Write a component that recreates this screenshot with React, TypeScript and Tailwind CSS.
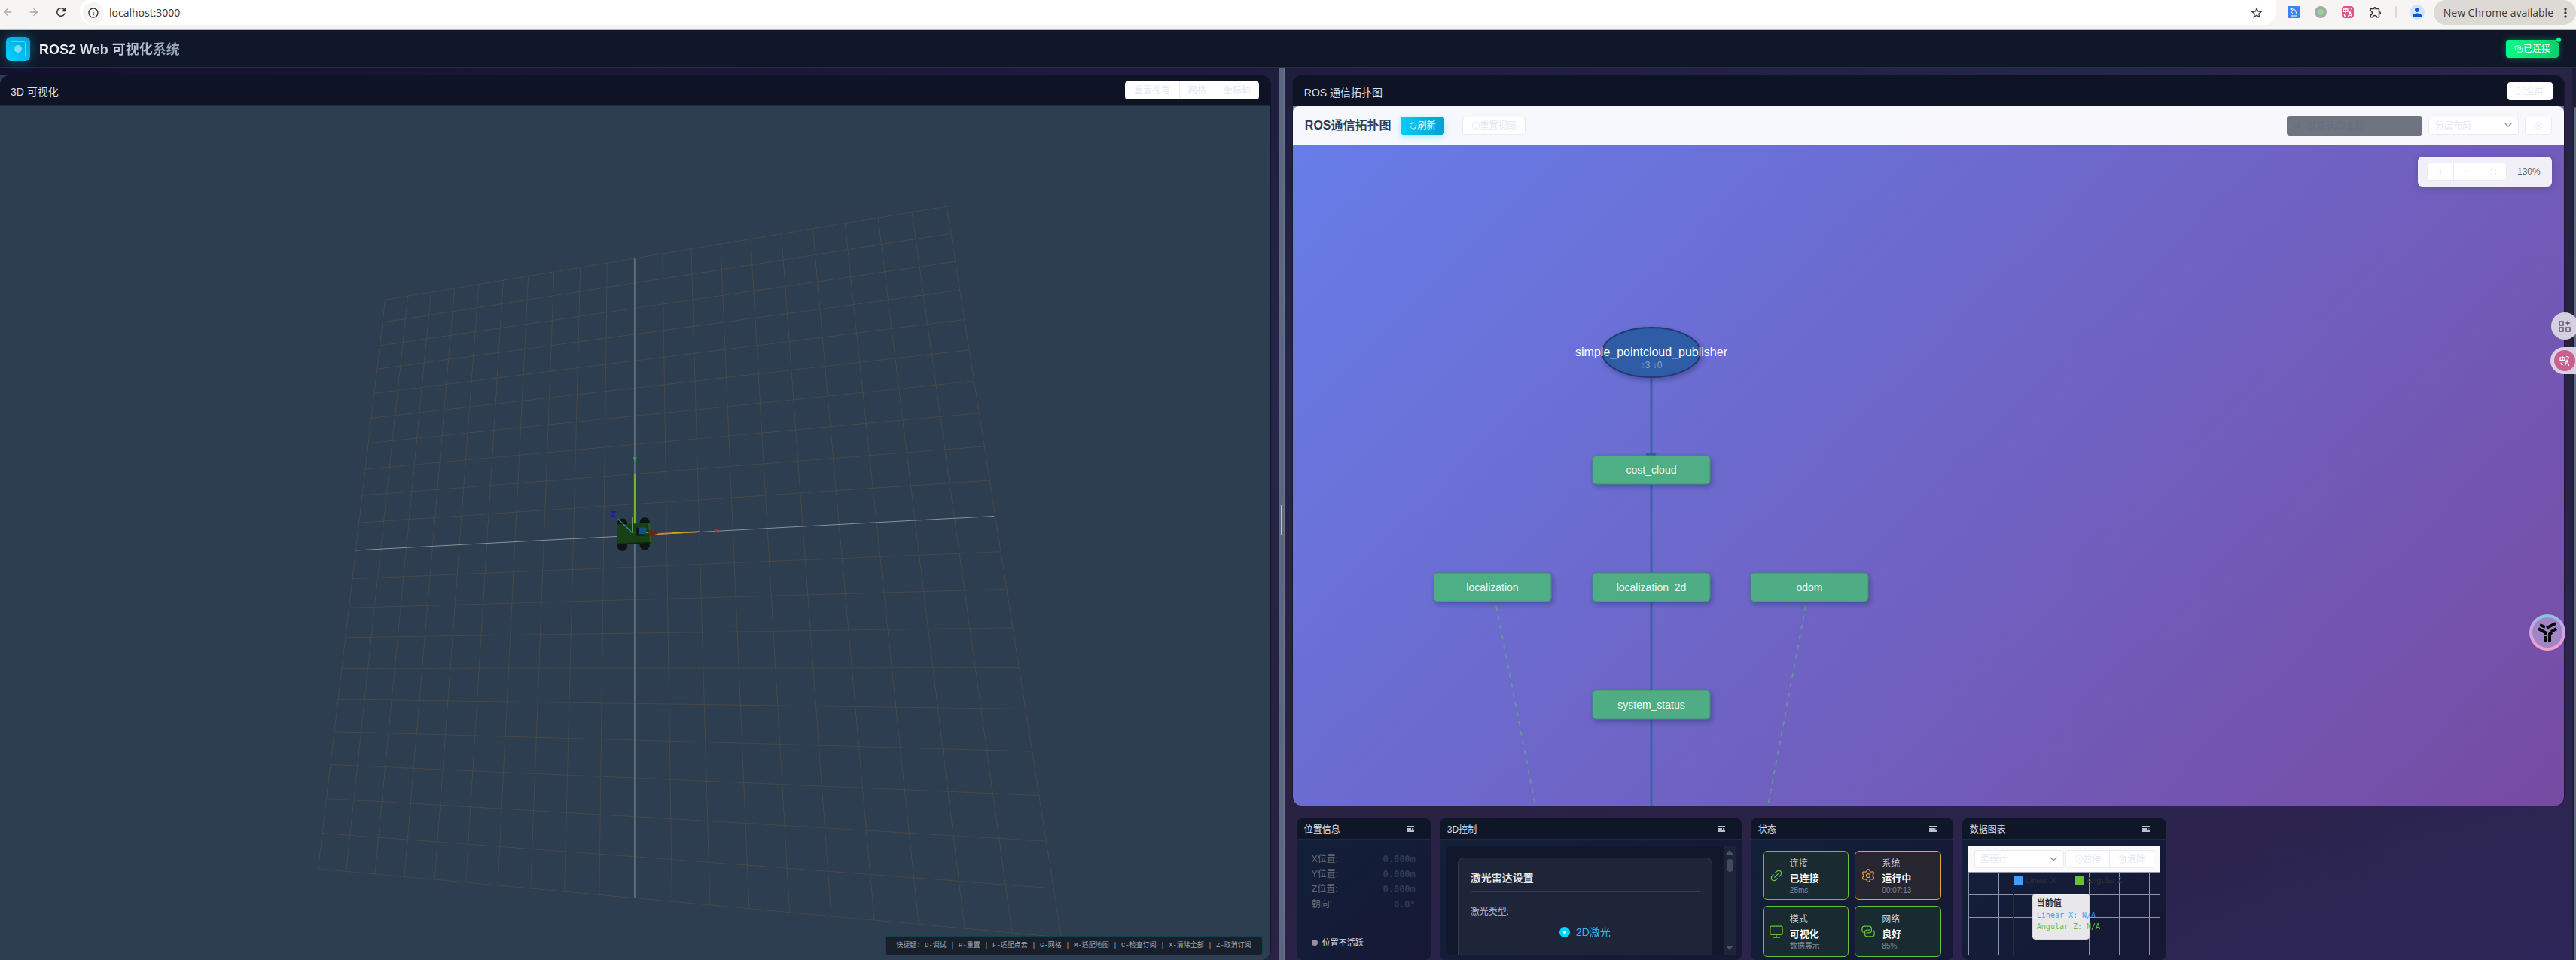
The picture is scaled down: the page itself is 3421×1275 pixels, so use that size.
import type { ReactNode } from "react";
import {
  MdArrowBack,
  MdArrowForward,
  MdMoreVert,
  MdOutlineExtension,
  MdOutlineInfo,
  MdPerson,
  MdRefresh,
  MdStarBorder,
} from "react-icons/md";
import { ChevronDown, CirclePause, Minus, Plus, Search, Settings, Trash2 } from "lucide-react";

/* ---------- icons on a 1024 grid ---------- */

const PATHS = {
  connection: [
    "M640 384v64H448a128 128 0 0 0-128 128v128a128 128 0 0 0 128 128h320a128 128 0 0 0 128-128V576a128 128 0 0 0-64-110.848V394.88c74.56 26.368 128 97.472 128 181.056v128a192 192 0 0 1-192 192H448a192 192 0 0 1-192-192V576a192 192 0 0 1 192-192z",
    "M384 640v-64h192a128 128 0 0 0 128-128V320a128 128 0 0 0-128-128H256a128 128 0 0 0-128 128v128a128 128 0 0 0 64 110.848v70.272A192.064 192.064 0 0 1 64 448V320a192 192 0 0 1 192-192h320a192 192 0 0 1 192 192v128a192 192 0 0 1-192 192z",
  ],
  link: [
    "M715.648 625.152 670.4 579.904l90.496-90.56c75.008-74.944 85.12-186.368 22.656-248.896-62.528-62.464-173.952-52.352-248.96 22.656L444.16 353.6l-45.248-45.248 90.496-90.496c100.032-99.968 251.968-110.08 339.456-22.656 87.488 87.488 77.312 239.424-22.656 339.456l-90.496 90.496zm-90.496 90.496-90.496 90.496C434.624 906.112 282.688 916.224 195.2 828.8c-87.488-87.488-77.312-239.424 22.656-339.456l90.496-90.496 45.248 45.248-90.496 90.56c-75.008 74.944-85.12 186.368-22.656 248.896 62.528 62.464 173.952 52.352 248.96-22.656l90.496-90.496zm0-362.048 45.248 45.248L398.848 670.4 353.6 625.152z",
  ],
  monitor: [
    "M544 768v128h192a32 32 0 1 1 0 64H288a32 32 0 1 1 0-64h192V768H192A128 128 0 0 1 64 640V256a128 128 0 0 1 128-128h640a128 128 0 0 1 128 128v384a128 128 0 0 1-128 128zM192 192a64 64 0 0 0-64 64v384a64 64 0 0 0 64 64h640a64 64 0 0 0 64-64V256a64 64 0 0 0-64-64z",
  ],
  refresh: [
    "M771.776 794.88A384 384 0 0 1 128 512h64a320 320 0 0 0 555.712 216.448H654.72a32 32 0 1 1 0-64h149.056a32 32 0 0 1 32 32v148.928a32 32 0 1 1-64 0v-50.56zM276.288 295.616h92.992a32 32 0 0 1 0 64H220.16a32 32 0 0 1-32-32V178.56a32 32 0 0 1 64 0v50.56A384 384 0 0 1 896.128 512h-64a320 320 0 0 0-555.776-216.384z",
  ],
  fullscreen: [
    "M96 96h256v64H160v192H96zM928 96v256h-64V160H672V96zM96 928V672h64v192h192v64zM928 928H672v-64h192V672h64z",
  ],
  aim: [
    "M512 64a448 448 0 1 1 0 896 448 448 0 0 1 0-896zm0 64a384 384 0 1 0 0 768 384 384 0 0 0 0-768z",
    "M480 96h64v224h-64zM480 704h64v224h-64zM96 480h224v64H96zM704 480h224v64H704z",
  ],
};

function Icon({ name, className }: { name: keyof typeof PATHS; className: string }) {
  return (
    <svg viewBox="0 0 1024 1024" fill="currentColor" className={className} aria-hidden="true">
      {PATHS[name].map((d) => (
        <path key={d} d={d} />
      ))}
    </svg>
  );
}

function TranslateGlyph() {
  return (
    <svg viewBox="0 0 24 24" fill="none" stroke="#fff" strokeWidth="2" className="size-full" aria-hidden="true">
      <path d="M3 6h9v5H3zM7.500 3v11" />
      <path d="M15 4h3q2 0 2 4M9 20H7q-2 0-2-4" />
      <path d="M12.500 22l4-11 4 11M14 18.500h5" />
    </svg>
  );
}

/* ---------- browser bar ---------- */

function BrowserBar() {
  return (
    <div className="flex h-10 shrink-0 items-start border-b border-[#b4b4b8] bg-[#f6f5f4] font-['Open_Sans',sans-serif] text-[#333]">
      <div className="flex h-8 w-[106px] shrink-0 items-center justify-between pl-0.5 pr-4">
        <button aria-label="Back"><MdArrowBack className="size-4 text-[#a9a9a9]" /></button>
        <button aria-label="Forward"><MdArrowForward className="size-4 text-[#a9a9a9]" /></button>
        <button aria-label="Reload"><MdRefresh className="size-[18px]" /></button>
      </div>
      <div className="flex h-[33px] flex-1 items-center rounded-b-2xl rounded-tl-xl bg-white pl-1 pr-4">
        <span className="flex size-7 items-center justify-center rounded-full bg-[#f6f5f4]">
          <MdOutlineInfo className="size-4" />
        </span>
        <input
          aria-label="Address"
          defaultValue="localhost:3000"
          className="ml-1 flex-1 bg-transparent pl-[3px] text-sm leading-5 text-[#333] outline-none"
        />
        <button aria-label="Bookmark"><MdStarBorder className="size-[18px]" /></button>
      </div>
      <div className="flex h-8 items-center gap-5 pl-4 pr-3">
        <svg viewBox="0 0 16 16" className="size-4" aria-hidden="true">
          <rect width="16" height="16" rx="1" fill="#3b82f6" />
          <path d="M4 3l6 2 2 5-4 1-3-3zM4 3l5 5M4 13h8" fill="none" stroke="#fff" />
        </svg>
        <span className="size-4 rounded-full border-4 border-[#a9a9a9] bg-[#8ddb8f]" />
        <span className="size-4 rounded-sm bg-[#e0508c]"><TranslateGlyph /></span>
        <div className="flex items-center gap-[17px]">
          <MdOutlineExtension className="size-[18px]" />
          <span className="h-4 w-0.5 bg-[#dcdad6]" />
          <span className="flex size-5 items-center justify-center rounded-full bg-[#d3e3fd]">
            <MdPerson className="size-[18px] text-[#0b57d0]" />
          </span>
        </div>
      </div>
      <button className="flex h-[33px] items-center gap-1.5 rounded-full bg-[#dddad5] pl-[13px] pr-1 text-sm leading-5 text-[#3a3a3a]">
        New Chrome available
        <MdMoreVert className="size-5" />
      </button>
    </div>
  );
}

/* ---------- app header ---------- */

function AppHeader() {
  return (
    <header className="flex h-[50px] shrink-0 items-center justify-between border-b border-[#232f40] bg-[#0f1729] pl-2 pr-[23px]">
      <div className="flex items-center gap-3">
        <svg viewBox="0 0 32 32" className="size-8 rounded-md shadow-[0_0_16px_rgba(0,212,255,0.4)]" aria-hidden="true">
          <defs>
            <linearGradient id="logo" x1="0" y1="1" x2="1" y2="0">
              <stop offset="0" stopColor="#00d4ff" />
              <stop offset="1" stopColor="#0a9fd6" />
            </linearGradient>
          </defs>
          <rect width="32" height="32" rx="5" fill="url(#logo)" />
          <rect x="6.500" y="6.500" width="19" height="19" rx="1" fill="none" stroke="#5fd2f2" />
          <circle cx="16" cy="16" r="5" fill="#73dcf7" />
        </svg>
        <h1 className="bg-gradient-to-r from-white to-[#94a3b8] bg-clip-text pt-0.5 text-lg font-semibold leading-6 text-transparent">
          ROS2 Web 可视化系统
        </h1>
      </div>
      <button className="relative flex h-6 items-center rounded bg-gradient-to-r from-[#00ff88] to-[#0bd06c] px-[11px] text-xs text-white shadow-[0_0_10px_rgba(0,255,136,0.35)]">
        <Icon name="connection" className="size-3" />
        已连接
        <span className="absolute -right-1 -top-1 size-2 rounded-full border border-[#0f4030] bg-[#00ff88]" />
      </button>
    </header>
  );
}

/* ---------- 3D scene ---------- */

type Pt = [number, number];

/* Projects the unit square onto the ground quad seen by the camera. */
function projector(p0: Pt, p1: Pt, p2: Pt, p3: Pt) {
  const dx1 = p1[0] - p2[0];
  const dx2 = p3[0] - p2[0];
  const dx3 = p0[0] - p1[0] + p2[0] - p3[0];
  const dy1 = p1[1] - p2[1];
  const dy2 = p3[1] - p2[1];
  const dy3 = p0[1] - p1[1] + p2[1] - p3[1];
  const det = dx1 * dy2 - dx2 * dy1;
  const g = (dx3 * dy2 - dx2 * dy3) / det;
  const h = (dx1 * dy3 - dx3 * dy1) / det;
  return (u: number, v: number): Pt => {
    const w = g * u + h * v + 1;
    return [
      ((p1[0] - p0[0] + g * p1[0]) * u + (p3[0] - p0[0] + h * p3[0]) * v + p0[0]) / w,
      ((p1[1] - p0[1] + g * p1[1]) * u + (p3[1] - p0[1] + h * p3[1]) * v + p0[1]) / w,
    ];
  };
}

const ground = projector([512, 398], [1257, 274], [1409, 1244], [423, 1153]);
const steps = Array.from({ length: 21 }, (_, i) => i / 20);

function segment(a: Pt, b: Pt) {
  return `M${a[0].toFixed(1)} ${a[1].toFixed(1)}L${b[0].toFixed(1)} ${b[1].toFixed(1)}`;
}

function Scene() {
  const grid = steps
    .filter((t) => t !== 0.5)
    .map((t) => segment(ground(t, 0), ground(t, 1)) + segment(ground(0, t), ground(1, t)))
    .join("");
  return (
    <svg viewBox="0 141 1687 1133" preserveAspectRatio="xMidYMid slice" className="absolute inset-0 size-full" role="img" aria-label="3D scene">
      <path d={grid} stroke="#484848" strokeWidth="1" fill="none" />
      <path d="M843 343V1191" stroke="#5f6b78" strokeWidth="2" />
      <path d="M473 730.500L1320 685" stroke="#8b9096" strokeWidth="1" />
      <g transform="translate(760 560) scale(.3333)">
        <path d="M249 208V405" stroke="#76b82a" strokeWidth="6" />
        <path d="M243 142h12l-6 8zM249 148v7" stroke="#1fb53a" strokeWidth="3" fill="#1fb53a" />
        <path d="M310 447L505 437" stroke="#d18a1c" strokeWidth="5" />
        <path d="M400 441L505 437" stroke="#d6b520" strokeWidth="3" />
        <path d="M566 428l12 12M578 428l-12 12" stroke="#c62828" strokeWidth="5" />
        <circle cx="200" cy="404" r="20" fill="#101214" />
        <circle cx="289" cy="400" r="20" fill="#101214" />
        <circle cx="200" cy="494" r="20" fill="#101214" />
        <circle cx="289" cy="490" r="20" fill="#101214" />
        <path d="M178 408L306 402L312 480L180 487z" fill="#174017" />
        <path d="M180 484L312 478V483L180 489z" fill="#0c260c" />
        <path d="M306 402L312 478" stroke="#1f661f" strokeWidth="5" />
        <path d="M238 440L255 438" stroke="#b35a12" strokeWidth="3" />
        <path d="M240 380V438" stroke="#6f9a5c" strokeWidth="5" />
        <path d="M183 386L239 441" stroke="#2d90b0" strokeWidth="4" />
        <path d="M256 421h12v32h-12z" fill="#0a1622" />
        <path d="M266 420h29v26h-29z" fill="#134e86" />
        <path d="M258 446h36l-4 8h-32z" fill="#0a2038" />
        <path d="M295 440h9" stroke="#9db024" strokeWidth="4" />
        <path d="M306 429L344 443L308 455z" fill="#7a2109" />
        <path d="M157 358h14L158 375h14" stroke="#1a1aa6" strokeWidth="5" fill="none" />
      </g>
    </svg>
  );
}

const lightBtn = "bg-white h-6 text-xs leading-6 text-[#e4e9f0]";

function ScenePanel() {
  return (
    <section className="mt-2.5 mr-2.5 flex min-h-0 min-w-0 flex-1 flex-col overflow-hidden rounded-xl rounded-l-none border-r border-[#0f1524] bg-[#2c3e50]">
      <div className="flex h-[41px] shrink-0 items-center justify-between rounded-tl-xl border-b border-[#1d2a3c] bg-[#0e1425] pl-3.5 pr-[15px]">
        <h2 className="pt-1 text-sm leading-5 text-[#d9e0ea]">3D 可视化</h2>
        <div className="flex overflow-hidden rounded">
          <button className={`${lightBtn} px-3`}>重置视角</button>
          <button className={`${lightBtn} border-l border-[#e8ebf2] px-[11px]`}>网格</button>
          <button className={`${lightBtn} border-l border-[#e8ebf2] px-[11px]`}>坐标轴</button>
        </div>
      </div>
      <div className="relative min-h-0 flex-1 overflow-hidden">
        <Scene />
        <p className="absolute bottom-1.5 right-2.5 flex h-[26px] items-center rounded border border-[#0f4350] bg-[#17202a] px-3.5 font-['Liberation_Mono','Noto_Sans_CJK_SC',monospace] text-[9px] leading-4 text-[#a3a8ae]">
          快捷键: D-调试 | R-重置 | F-适配点云 | G-网格 | M-适配地图 | C-检查订阅 | X-清除全部 | Z-取消订阅
        </p>
      </div>
    </section>
  );
}

/* ---------- topology ---------- */

const topics = [
  { name: "cost_cloud", x: 2193, y: 624 },
  { name: "localization", x: 1982, y: 780 },
  { name: "localization_2d", x: 2193, y: 780 },
  { name: "odom", x: 2403, y: 780 },
  { name: "system_status", x: 2193, y: 936 },
];

function Graph() {
  return (
    <svg
      viewBox="1717 192 1689 878"
      preserveAspectRatio="xMinYMin slice"
      className="absolute inset-0 size-full font-['Liberation_Sans',sans-serif]"
      role="img"
      aria-label="ROS graph"
    >
      <defs>
        <filter id="drop" x="-20%" y="-30%" width="140%" height="170%">
          <feDropShadow dx="2" dy="3" stdDeviation="3" floodColor="#1c2250" floodOpacity="0.4" />
        </filter>
      </defs>
      <path d="M1987 805L2041 1080M2398 805L2346 1080" stroke="#5fae7c" strokeOpacity="0.65" strokeWidth="2" strokeDasharray="6 7" />
      <path d="M2193 500V1075" stroke="#3a62a8" strokeWidth="3" />
      <path d="M2185 601H2200L2193 620z" fill="#3a5c9f" />
      <ellipse cx="2193" cy="468" rx="65" ry="33" fill="#2e5ca5" stroke="#203a74" strokeWidth="2" filter="url(#drop)" />
      <text x="2193" y="473" textAnchor="middle" fontSize="16" fill="#fff">simple_pointcloud_publisher</text>
      <text x="2193" y="489" textAnchor="middle" fontSize="12" fill="#8fa3cd">↑3 ↓0</text>
      {topics.map((t) => (
        <g key={t.name}>
          <rect x={t.x - 78} y={t.y - 19} width="156" height="38" rx="5" fill="#4daf84" fillOpacity="0.97" stroke="#3d8f70" filter="url(#drop)" />
          <text x={t.x} y={t.y + 5} textAnchor="middle" fontSize="14" fill="#eefaf4">{t.name}</text>
        </g>
      ))}
    </svg>
  );
}

function TopologyPanel() {
  return (
    <section className="flex min-h-0 flex-1 flex-col overflow-hidden rounded-xl border-x border-[#1a1833] bg-[#0e1425]">
      <div className="flex h-[41px] shrink-0 items-center justify-between px-[15px]">
        <h2 className="pt-1 text-sm leading-5 text-[#d9e0ea]">ROS 通信拓扑图</h2>
        <button className={`${lightBtn} flex items-center rounded px-3`}>
          <Icon name="fullscreen" className="size-3" />
          全屏
        </button>
      </div>
      <div className="flex min-h-0 flex-1 flex-col bg-[linear-gradient(135deg,#667eea,#764ba2)]">
        <div className="flex h-[51px] shrink-0 items-center rounded-t-lg bg-white/95 px-4">
          <h3 className="text-base font-semibold leading-6 text-[#2c3e50]">ROS通信拓扑图</h3>
          <button className="ml-3 flex h-6 items-center rounded bg-gradient-to-r from-[#00ccf8] to-[#069fd2] px-[11px] text-xs text-white shadow-[0_3px_8px_rgba(0,212,255,0.35)]">
            <Icon name="refresh" className="size-3" />
            刷新
          </button>
          <button className="ml-6 flex h-6 items-center rounded border border-[#e8ebf2] bg-white px-[11px] text-xs text-[#e4e9f0]">
            <Icon name="aim" className="size-3" />
            重置视图
          </button>
          <label className="ml-auto flex h-[26px] w-[180px] items-center gap-2 rounded bg-[#6f7480] px-2 text-[#637083]">
            <Search className="size-3" strokeWidth={2} />
            <input
              aria-label="过滤节点/主题"
              placeholder="过滤节点/主题"
              className="w-full bg-transparent text-xs outline-none placeholder:text-[#637083]"
            />
          </label>
          <div className="relative ml-2">
            <select aria-label="布局" className="h-6 w-[120px] appearance-none rounded border border-[#e8ebf2] bg-white pl-2 text-xs text-[#e4e9f0]">
              <option>分层布局</option>
            </select>
            <ChevronDown className="pointer-events-none absolute right-1.5 top-1 size-4 text-[#909399]" />
          </div>
          <button aria-label="设置" className="ml-2 flex h-6 w-9 items-center justify-center rounded border border-[#e8ebf2] bg-white text-[#e4e9f0]">
            <Settings className="size-3" />
          </button>
        </div>
        <div className="relative min-h-0 flex-1 overflow-hidden">
          <Graph />
          <div className="absolute right-4 top-4 flex h-10 items-center rounded-md bg-white/90 px-3 shadow-[0_2px_10px_rgba(0,0,0,0.15)]">
            <div className="flex overflow-hidden rounded border border-[#e8ebf2] bg-white text-[#e4e9f0]">
              <button aria-label="放大" className="flex h-[22px] w-[34px] items-center justify-center"><Plus className="size-3" /></button>
              <button aria-label="缩小" className="flex h-[22px] w-[35px] items-center justify-center border-l border-[#e8ebf2]"><Minus className="size-3" /></button>
              <button aria-label="重置缩放" className="flex h-[22px] w-[35px] items-center justify-center border-l border-[#e8ebf2]"><Icon name="refresh" className="size-3" /></button>
            </div>
            <span className="w-12 pl-3.5 text-xs text-[#606266]">130%</span>
          </div>
        </div>
      </div>
    </section>
  );
}

/* ---------- bottom widgets ---------- */

function Widget({ title, className, children }: { title: string; className: string; children: ReactNode }) {
  return (
    <section className={`flex shrink-0 flex-col overflow-hidden rounded-lg bg-[linear-gradient(135deg,#12203a,#161834)] ${className}`}>
      <div className="flex h-7 shrink-0 items-center justify-between border-b border-[#1e2b3f] bg-[#0f1628] pl-2.5 pr-[22px]">
        <h2 className="pt-0.5 text-xs leading-4 text-[#d9e0ea]">{title}</h2>
        <button aria-label="菜单">
          <svg viewBox="0 0 10 8" className="h-2 w-2.5" fill="#b9c1cd" aria-hidden="true">
            <path d="M0 0h10v2H0zM0 3h6v2H0zM7 3l3 1-3 1zM0 6h10v2H0z" />
          </svg>
        </button>
      </div>
      <div className="flex min-h-0 flex-1 flex-col p-2 pb-[7px]">{children}</div>
    </section>
  );
}

const pose = [
  ["X位置:", "0.000m"],
  ["Y位置:", "0.000m"],
  ["Z位置:", "0.000m"],
  ["朝向:", "0.0°"],
];

function PoseWidget() {
  return (
    <Widget title="位置信息" className="w-[178px]">
      <dl className="px-3 pt-2">
        {pose.map(([k, v]) => (
          <div key={k} className="flex h-5 items-center justify-between text-xs leading-5">
            <dt className="text-[#676b73]">{k}</dt>
            <dd className="font-['DejaVu_Sans_Mono',monospace] font-bold text-[#2d3e52]">{v}</dd>
          </div>
        ))}
      </dl>
      <p className="mt-auto flex items-center gap-1.5 px-3 pb-2 text-[11px] leading-4 text-[#d9e0ea]">
        <span className="size-2 rounded-full bg-[#909399]" />
        位置不活跃
      </p>
    </Widget>
  );
}

function ControlWidget() {
  return (
    <Widget title="3D控制" className="w-[401px]">
      <div className="flex min-h-0 flex-1 overflow-hidden rounded-l-lg bg-[#12182c]">
        <div className="min-w-0 flex-1 overflow-hidden px-4 pt-4">
          <div className="h-64 rounded-lg border border-[#343d4f] bg-[#1f2538] px-4 pt-4">
            <h3 className="border-b border-[#343d4f] pb-2 text-sm font-semibold leading-5 text-[#e2e8f0]">激光雷达设置</h3>
            <p className="mt-4 text-xs leading-5 text-[#b4bdcb]">激光类型:</p>
            <label className="mt-[7px] flex items-center justify-center gap-2 text-sm leading-5 text-[#1fc0e6]">
              <input
                type="radio"
                name="laser"
                defaultChecked
                className="size-3.5 appearance-none rounded-full border-[5px] border-[#00d4ff] bg-white"
              />
              2D激光
            </label>
          </div>
        </div>
        <div className="flex w-[15px] flex-col items-center bg-[#1d2438] py-1.5">
          <svg viewBox="0 0 10 6" className="h-1.5 w-2.5" aria-hidden="true"><path d="M5 0l5 6H0z" fill="#4d5568" /></svg>
          <span className="mt-1.5 h-[17px] w-[9px] rounded-full bg-[#414a60]" />
          <svg viewBox="0 0 10 6" className="mt-auto h-1.5 w-2.5" aria-hidden="true"><path d="M0 0h10L5 6z" fill="#4d5568" /></svg>
        </div>
      </div>
    </Widget>
  );
}

function StatusCard({ tone, icon, label, value, note }: { tone: "ok" | "warn"; icon: ReactNode; label: string; value: string; note: string }) {
  const color = tone === "ok" ? "border-[#67c23a] bg-[#1a2a31] text-[#67c23a]" : "border-[#e6a23c] bg-[#27252f] text-[#e6a23c]";
  return (
    <div className={`flex items-center gap-2 rounded-md border px-[7px] ${color}`}>
      {icon}
      <div>
        <div className="text-xs leading-5 text-[#c4ccd8]">{label}</div>
        <div className="text-[13px] font-bold leading-5 text-white">{value}</div>
        <div className="text-[10px] leading-3 text-[#7d8a9e]">{note}</div>
      </div>
    </div>
  );
}

function StatusWidget() {
  return (
    <Widget title="状态" className="w-[269px]">
      <div className="grid flex-1 grid-cols-2 grid-rows-[65px_68px] gap-2 px-2 pt-[7px]">
        <StatusCard tone="ok" icon={<Icon name="link" className="size-5" />} label="连接" value="已连接" note="25ms" />
        <StatusCard tone="warn" icon={<Settings className="size-5" strokeWidth={1.5} />} label="系统" value="运行中" note="00:07:13" />
        <StatusCard tone="ok" icon={<Icon name="monitor" className="size-5" />} label="模式" value="可视化" note="数据展示" />
        <StatusCard tone="ok" icon={<Icon name="connection" className="size-5" />} label="网络" value="良好" note="85%" />
      </div>
    </Widget>
  );
}

function ChartWidget() {
  return (
    <Widget title="数据图表" className="w-[271px]">
      <div className="flex h-[35px] shrink-0 items-center bg-[#fafafa] px-2 text-xs text-[#e4e9f0]">
        <div className="relative">
          <select aria-label="数据源" className="h-6 w-[119px] appearance-none rounded border border-[#e8ebf2] bg-white pl-[7px]">
            <option>里程计</option>
          </select>
          <ChevronDown className="pointer-events-none absolute right-1.5 top-1 size-4 text-[#909399]" />
        </div>
        <div className="ml-0.5 flex h-6 flex-1 rounded border border-[#e8ebf2] bg-white">
          <button className="flex flex-1 items-center justify-center"><CirclePause className="size-3" />暂停</button>
          <button className="flex flex-1 items-center justify-center border-l border-[#e8ebf2]"><Trash2 className="size-3" />清除</button>
        </div>
      </div>
      <div className="relative min-h-0 flex-1 overflow-hidden">
        <svg className="absolute inset-0 size-full" aria-hidden="true">
          <defs>
            <pattern id="cells" width="40" height="30" patternUnits="userSpaceOnUse">
              <path d="M.5 0V30M0 .5H40" stroke="#8f93a3" />
            </pattern>
          </defs>
          <rect width="100%" height="100%" fill="url(#cells)" />
          <path d="M60 30V120" stroke="#2b2d36" strokeWidth="2" />
        </svg>
        <div className="absolute left-[60px] top-[3px] flex gap-6 text-[11px] leading-4 text-[#2f323c]">
          <span className="flex items-center gap-1"><i className="size-3 bg-[#409eff]" />Linear X</span>
          <span className="flex items-center gap-1"><i className="size-3 bg-[#67c23a]" />Angular Z</span>
        </div>
        <div className="absolute left-[85px] top-[29px] h-[61px] w-[76px] whitespace-nowrap rounded border border-[#d4d6dc] bg-white/90 px-[5px] pt-1 font-['DejaVu_Sans_Mono','Noto_Sans_CJK_SC',monospace] text-[10px]">
          <div className="text-[11px] font-bold leading-4 text-[#303133]">当前值</div>
          <div className="leading-[15px] text-[#409eff]">Linear X: N/A</div>
          <div className="leading-[15px] text-[#67c23a]">Angular Z: N/A</div>
        </div>
      </div>
    </Widget>
  );
}

/* ---------- page ---------- */

function FloatingTools() {
  return (
    <>
      <button aria-label="工具" className="absolute -right-[3px] top-[415px] flex size-9 items-center justify-center rounded-full bg-[#d5cfe2]">
        <svg viewBox="0 0 16 16" className="size-4" fill="none" stroke="#5c5768" strokeWidth="1.500" aria-hidden="true">
          <path d="M1 2h5v5H1zM1 10h5v5H1zM10 10h5v5h-5z" />
          <path d="M12 0l1 3 3 1-3 1-1 3-1-3-3-1 3-1z" fill="#5c5768" stroke="none" />
        </svg>
      </button>
      <button aria-label="翻译" className="absolute right-0 top-[461px] flex h-9 w-[34px] items-center rounded-l-full bg-[#d9d0e4] pl-[5px]">
        <span className="size-7 rounded-full bg-[#c9608f] p-1.5"><TranslateGlyph /></span>
      </button>
      <button aria-label="助手" className="absolute right-3.5 top-[816px] size-12 rounded-full bg-[conic-gradient(#7fc6dd,#c5a8e8,#f0a0cc,#f0a0cc,#c5a8e8,#7fc6dd)] p-1">
        <span className="flex size-10 items-center justify-center rounded-full bg-[#a285c6]">
          <svg viewBox="0 0 28 28" className="size-7" fill="none" stroke="#05060a" strokeWidth="4" aria-hidden="true">
            <path d="M4 4l7 3M2 9l9 5v3M13 8l12-6M26 9l-7 4M11 19v8M17 27V16l3-2" />
          </svg>
        </span>
      </button>
    </>
  );
}

export default function App() {
  return (
    <div className="relative flex h-screen flex-col overflow-hidden bg-[linear-gradient(160deg,#120f2b_0%,#26264a_45%,#28213f_65%,#2e2658_100%)] font-['Liberation_Sans','Noto_Sans_CJK_SC',sans-serif]">
      <BrowserBar />
      <AppHeader />
      <main className="flex min-h-0 flex-1">
        <div className="flex w-[49.63%] shrink-0">
          <ScenePanel />
        </div>
        <div className="flex w-2 shrink-0 items-center justify-center border-x border-[#6b7694] bg-[#5b6680] pt-4">
          <span className="h-10 w-0.5 bg-[#bcc1cf]" />
        </div>
        <div className="flex min-w-0 flex-1 flex-col px-[10px] pt-2.5">
          <TopologyPanel />
          <div className="mt-[17px] flex h-[188px] shrink-0 gap-3 pl-1.5">
            <PoseWidget />
            <ControlWidget />
            <StatusWidget />
            <ChartWidget />
          </div>
        </div>
        <div className="w-[5px] shrink-0 rounded-t bg-[#1c1f36] pl-0.5 pt-[52px]">
          <div className="h-full rounded-t bg-[#626e86]" />
        </div>
      </main>
      <FloatingTools />
    </div>
  );
}
